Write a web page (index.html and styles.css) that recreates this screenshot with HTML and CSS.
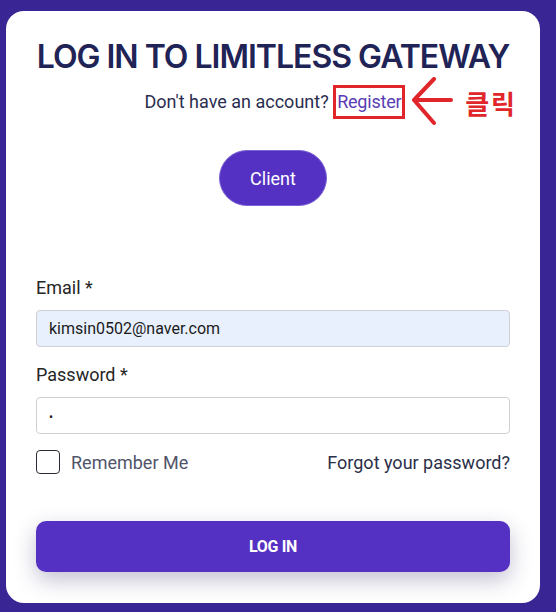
FILE: index.html
```html
<!DOCTYPE html>
<html lang="en">
<head>
<meta charset="utf-8">
<title>Log in</title>
<link rel="stylesheet" href="styles.css">
</head>
<body>
<main class="card">
  <h1 class="title">LOG IN TO LIMITLESS GATEWAY</h1>
  <p class="signup">Don't have an account? <span class="reg-wrap"><a class="register" href="#">Register</a><span class="note"><svg class="arrow" width="46" height="50" viewBox="0 0 46 50"><path d="M42 23 H5 M25 2 L5 23 L25 46" fill="none" stroke="#e0262a" stroke-width="4" stroke-linecap="round" stroke-linejoin="round"/></svg><span class="click">클릭</span></span></span></p>
  <div class="role-row"><button class="role">Client</button></div>
  <form class="form">
    <label class="label">Email *</label>
    <div class="input filled">kimsin0502@naver.com</div>
    <label class="label">Password *</label>
    <div class="input"><span class="dot">•</span></div>
    <div class="options">
      <label class="remember"><span class="box"></span>Remember Me</label>
      <a class="forgot" href="#">Forgot your password?</a>
    </div>
    <button class="login" type="button">LOG IN</button>
  </form>
</main>
</body>
</html>
```
FILE: styles.css
```css
* { box-sizing: border-box; }
html, body { margin: 0; padding: 0; }
body {
  background: #3a2594;
  font-family: Roboto, "Liberation Sans", sans-serif;
  width: 556px;
  height: 612px;
  overflow: hidden;
}
.card {
  margin: 11px 0 0 6px;
  width: 534px;
  height: 592px;
  background: #fff;
  border-radius: 18px;
  padding: 26px 30px 0 30px;
}
.title {
  margin: 0 -20px;
  white-space: nowrap;
  text-align: center;
  font-family: Inter, "Noto Sans", sans-serif;
  font-weight: 600;
  font-size: 32px;
  line-height: 40px;
  letter-spacing: -1px;
  color: #1f2356;
}
.signup {
  margin: 7px 0 0 0;
  text-align: center;
  font-size: 18px;
  line-height: 35px;
  color: #2a2d4f;
  padding-left: 4px;
}
.reg-wrap { position: relative; display: inline-block; }
.register {
  display: inline-block;
  color: #5a3db3;
  text-decoration: none;
  border: 3.5px solid #e0262a;
  padding: 0 1px;
  line-height: 28px;
  letter-spacing: -0.2px;
}
.note {
  position: absolute;
  left: 76px;
  top: -7px;
  display: flex;
  align-items: center;
  white-space: nowrap;
}
.arrow { display: block; }
.click {
  margin-left: 10px;
  font-family: "Noto Sans CJK KR", sans-serif;
  font-weight: 700;
  font-size: 26px;
  color: #e0262a;
  letter-spacing: 2px;
}
.role-row { display: flex; justify-content: center; margin-top: 31px; }
.role {
  width: 108px;
  height: 56px;
  border-radius: 28px;
  background: #5431c2;
  border: 1px solid #7c63d6;
  color: #fff;
  font-family: Roboto, sans-serif;
  font-size: 18px;
}
.form { margin-top: 72px; display: flex; flex-direction: column; }
.label {
  font-size: 18px;
  line-height: 20px;
  color: #252525;
  margin-bottom: 12px;
}
.input {
  height: 37px;
  border: 1px solid #cfcfd4;
  border-radius: 4px;
  padding: 0 12px;
  font-size: 16px;
  line-height: 35px;
  color: #1b1b1b;
  margin-bottom: 18px;
}
.input.filled { background: #e8f0fe; }
.dot { font-size: 12px; }
.options {
  display: flex;
  justify-content: space-between;
  align-items: center;
  margin-top: -2px;
}
.remember {
  display: flex;
  align-items: center;
  font-size: 18px;
  color: #50546a;
}
.box {
  width: 24px;
  height: 24px;
  border: 1.5px solid #2b2b35;
  border-radius: 4px;
  margin-right: 11px;
}
.forgot {
  font-size: 18px;
  color: #2b2f4a;
  text-decoration: none;
}
.login {
  margin-top: 47px;
  height: 51px;
  border: 0;
  border-radius: 10px;
  background: #5431c2;
  color: #fff;
  font-family: Roboto, sans-serif;
  font-weight: 700;
  font-size: 16px;
  letter-spacing: -0.3px;
  box-shadow: 0 8px 22px rgba(40, 30, 90, 0.28);
}
```
